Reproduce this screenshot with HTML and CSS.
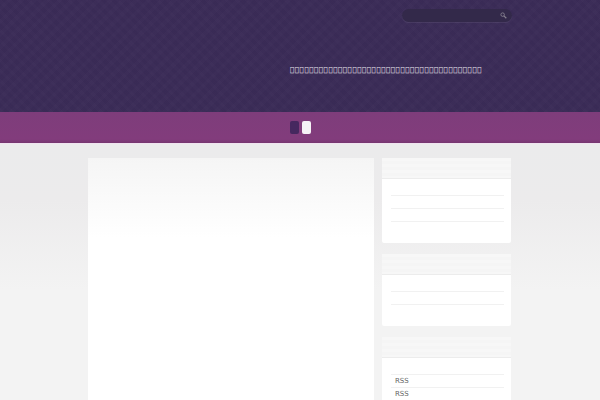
FILE: index.html
```html
<!DOCTYPE html>
<html lang="ja">
<head>
<meta charset="utf-8">
<title>Site</title>
<link rel="stylesheet" href="styles.css">
</head>
<body>
<header class="header">
  <div class="wrap header-inner">
    <form class="search">
      <svg class="search-icon" viewBox="0 0 8 8" width="7" height="7"><circle cx="3" cy="3" r="2" fill="none" stroke="#86808f" stroke-width="1"/><path d="M4.5 4.5 7.2 7.2" stroke="#86808f" stroke-width="1.4"/></svg>
    </form>
    <p class="tagline">&#xE000;&#xE000;&#xE000;&#xE000;&#xE000;&#xE000;&#xE000;&#xE000;&#xE000;&#xE000;&#xE000;&#xE000;&#xE000;&#xE000;&#xE000;&#xE000;&#xE000;&#xE000;&#xE000;&#xE000;&#xE000;&#xE000;&#xE000;&#xE000;&#xE000;&#xE000;&#xE000;&#xE000;&#xE000;&#xE000;&#xE000;&#xE000;&#xE000;&#xE000;&#xE000;&#xE000;&#xE000;&#xE000;&#xE000;&#xE000;</p>
  </div>
</header>
<nav class="nav">
  <span class="nav-item nav-dark"></span>
  <span class="nav-item nav-light"></span>
</nav>
<main class="wrap content">
  <section class="post"></section>
  <aside class="sidebar">
    <div class="widget">
      <div class="widget-title"></div>
      <ul class="widget-list list-a"><li></li><li></li><li></li></ul>
    </div>
    <div class="widget">
      <div class="widget-title"></div>
      <ul class="widget-list list-b"><li></li><li></li></ul>
    </div>
    <div class="widget">
      <div class="widget-title"></div>
      <ul class="widget-list list-c"><li>RSS</li><li>RSS</li></ul>
    </div>
  </aside>
</main>
</body>
</html>
```
FILE: styles.css
```css
* { box-sizing: border-box; }
html, body { margin: 0; padding: 0; height: 400px; overflow: hidden; }
body {
  font-family: "DejaVu Sans", sans-serif;
  background: linear-gradient(#ebebec 143px, #ecebec 200px, #f3f3f3 290px);
}
.wrap { width: 424px; margin-left: 88px; }
.header {
  height: 112px;
  background-color: #3b2c58;
  background-image:
    repeating-linear-gradient(45deg, rgba(255,255,255,.006) 0 3px, rgba(0,0,0,.012) 3px 7px),
    repeating-linear-gradient(-45deg, rgba(255,255,255,.006) 0 4px, rgba(0,0,0,.01) 4px 9px);
}
.header-inner { display: flex; flex-direction: column; align-items: flex-end; padding-top: 9px; }
.search {
  width: 110px; height: 13px; border-radius: 7px;
  background: #33294a;
  box-shadow: 0 1px 0 rgba(255,255,255,.07);
  display: flex; align-items: center; justify-content: flex-end;
  padding-right: 5px; margin: 0;
}
.search-icon { display: block; }
.tagline {
  margin: 42px 0 0 202px; align-self: flex-start;
  font-size: 7px; letter-spacing: .6px; line-height: 12px; color: #ece8f0; white-space: nowrap;
}
.nav {
  height: 32px;
  background: linear-gradient(#7e3d7b, #823c7c 88%, #763570);
  border-bottom: 1px solid #efe3ef;
  display: flex; justify-content: center; align-items: center; gap: 3px;
  padding: 0 0 1px 0;
}
.nav-item { display: block; width: 9px; height: 13px; border-radius: 2px; }
.nav-dark { background: #46285f; }
.nav-light { background: #f6f2f6; }
.content { display: flex; gap: 8px; padding-top: 14px; align-items: flex-start; }
.post { width: 286px; height: 300px; background: linear-gradient(#f5f5f5, #fff 80px); }
.sidebar { width: 129px; display: flex; flex-direction: column; gap: 11px; }
.widget { background: #fff; border-radius: 0 0 2px 2px; }
.widget-title {
  height: 21px; border-bottom: 1px solid #ececec;
  background: repeating-linear-gradient(#f7f7f7 0 3px, #f5f5f5 3px 6px);
}
.widget-list { list-style: none; margin: 0; padding: 4px 7px 0 9px; }
.widget-list li { height: 13px; border-bottom: 1px solid #f1f1f1; font-size: 7px; line-height: 13px; color: #666; padding-left: 4px; }
.list-a { height: 64px; }
.list-b { height: 51px; }
.list-c { padding-top: 16px; height: 80px; }
.list-c li { border-bottom: 0; border-top: 1px solid #f1f1f1; }
```
